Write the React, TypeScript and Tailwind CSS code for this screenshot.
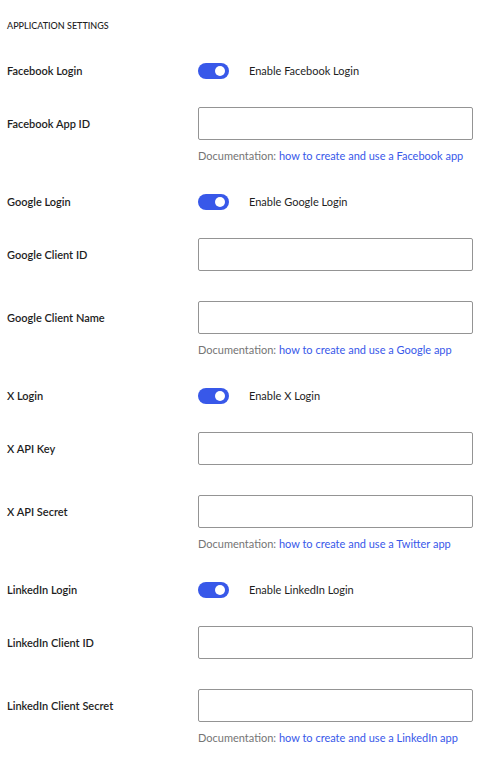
import React from 'react';

type Row =
  | { kind: 'toggle'; label: string; text: string }
  | { kind: 'input'; label: string; doc?: string };

const rows: Row[] = [
  { kind: 'toggle', label: 'Facebook Login', text: 'Enable Facebook Login' },
  { kind: 'input', label: 'Facebook App ID', doc: 'how to create and use a Facebook app' },
  { kind: 'toggle', label: 'Google Login', text: 'Enable Google Login' },
  { kind: 'input', label: 'Google Client ID' },
  { kind: 'input', label: 'Google Client Name', doc: 'how to create and use a Google app' },
  { kind: 'toggle', label: 'X Login', text: 'Enable X Login' },
  { kind: 'input', label: 'X API Key' },
  { kind: 'input', label: 'X API Secret', doc: 'how to create and use a Twitter app' },
  { kind: 'toggle', label: 'LinkedIn Login', text: 'Enable LinkedIn Login' },
  { kind: 'input', label: 'LinkedIn Client ID' },
  { kind: 'input', label: 'LinkedIn Client Secret', doc: 'how to create and use a LinkedIn app' },
];

const Toggle: React.FC = () => (
  <span className="relative inline-flex h-[16px] w-[31px] items-center rounded-full bg-[#3858e9]">
    <span className="absolute right-[4px] h-[10px] w-[10px] rounded-full bg-white" />
  </span>
);

const App: React.FC = () => {
  return (
    <div className="min-h-[768px] w-[490px] bg-white pl-[7px] pr-[17px] text-[11px] text-[#1e1e1e] font-['Lato',sans-serif]">
      <div className="h-[50px] pt-[19px] text-[9px] font-medium uppercase leading-[14px]">Application Settings</div>
      {rows.map((row) =>
        row.kind === 'toggle' ? (
          <div key={row.label} className="flex h-[42px] items-center">
            <div className="w-[191px] font-semibold">{row.label}</div>
            <Toggle />
            <span className="ml-[20px] text-[#1e1e1e]">{row.text}</span>
          </div>
        ) : (
          <div key={row.label} className="flex py-[15px]">
            <div className="flex h-[33px] w-[191px] items-center pt-[2px] font-semibold">{row.label}</div>
            <div className="flex-1">
              <input
                type="text"
                className="block h-[33px] w-full rounded-[2px] border border-[#949494] bg-white px-2"
              />
              {row.doc && (
                <p className="mt-[8px] mb-[2px] leading-[16px] text-[#757575]">
                  Documentation: <a className="text-[#3858e9]">{row.doc}</a>
                </p>
              )}
            </div>
          </div>
        )
      )}
    </div>
  );
};

export default App;
